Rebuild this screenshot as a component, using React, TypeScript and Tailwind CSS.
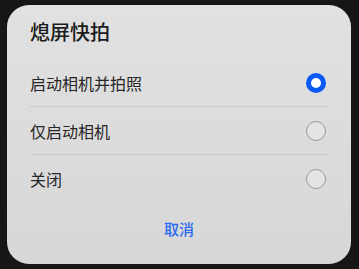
const options = ["启动相机并拍照", "仅启动相机", "关闭"];

const Radio = ({ checked }: { checked: boolean }) =>
  checked ? (
    <span className="flex h-[20px] w-[20px] items-center justify-center rounded-full bg-[#0a59f7]">
      <span className="h-[10px] w-[10px] rounded-full bg-white" />
    </span>
  ) : (
    <span className="h-[20px] w-[20px] rounded-full border-[1.5px] border-[#9a9a9a] bg-[#e4e4e4]" />
  );

export default function App() {
  const selected = 0;

  return (
    <div
      className="h-[269px] w-[359px] bg-[#161616] pl-[7px] pt-[5px]"
      style={{ fontFamily: '"Noto Sans CJK SC", "Noto Sans", sans-serif' }}
    >
      <div className="flex h-[259px] w-[344px] flex-col rounded-[22px] bg-gradient-to-b from-[#e1e1e1] to-[#d7d7d7] px-[23px] pt-[13px]">
        <h1 className="h-[28px] text-[20px] font-medium leading-[28px] text-[#1c1c1c]">熄屏快拍</h1>

        <ul className="mt-[13px] flex flex-col">
          {options.map((label, i) => (
            <li
              key={label}
              className={`flex h-[48px] items-center justify-between pr-[2px] ${
                i < options.length - 1 ? "border-b border-[#c9c9c9]" : ""
              }`}
            >
              <span className="text-[16px] leading-[22px] text-[#262626]">{label}</span>
              <Radio checked={i === selected} />
            </li>
          ))}
        </ul>

        <button className="mt-[4px] flex h-[44px] items-center justify-center text-[15px] font-medium text-[#2a6af2]">
          取消
        </button>
      </div>
    </div>
  );
}
